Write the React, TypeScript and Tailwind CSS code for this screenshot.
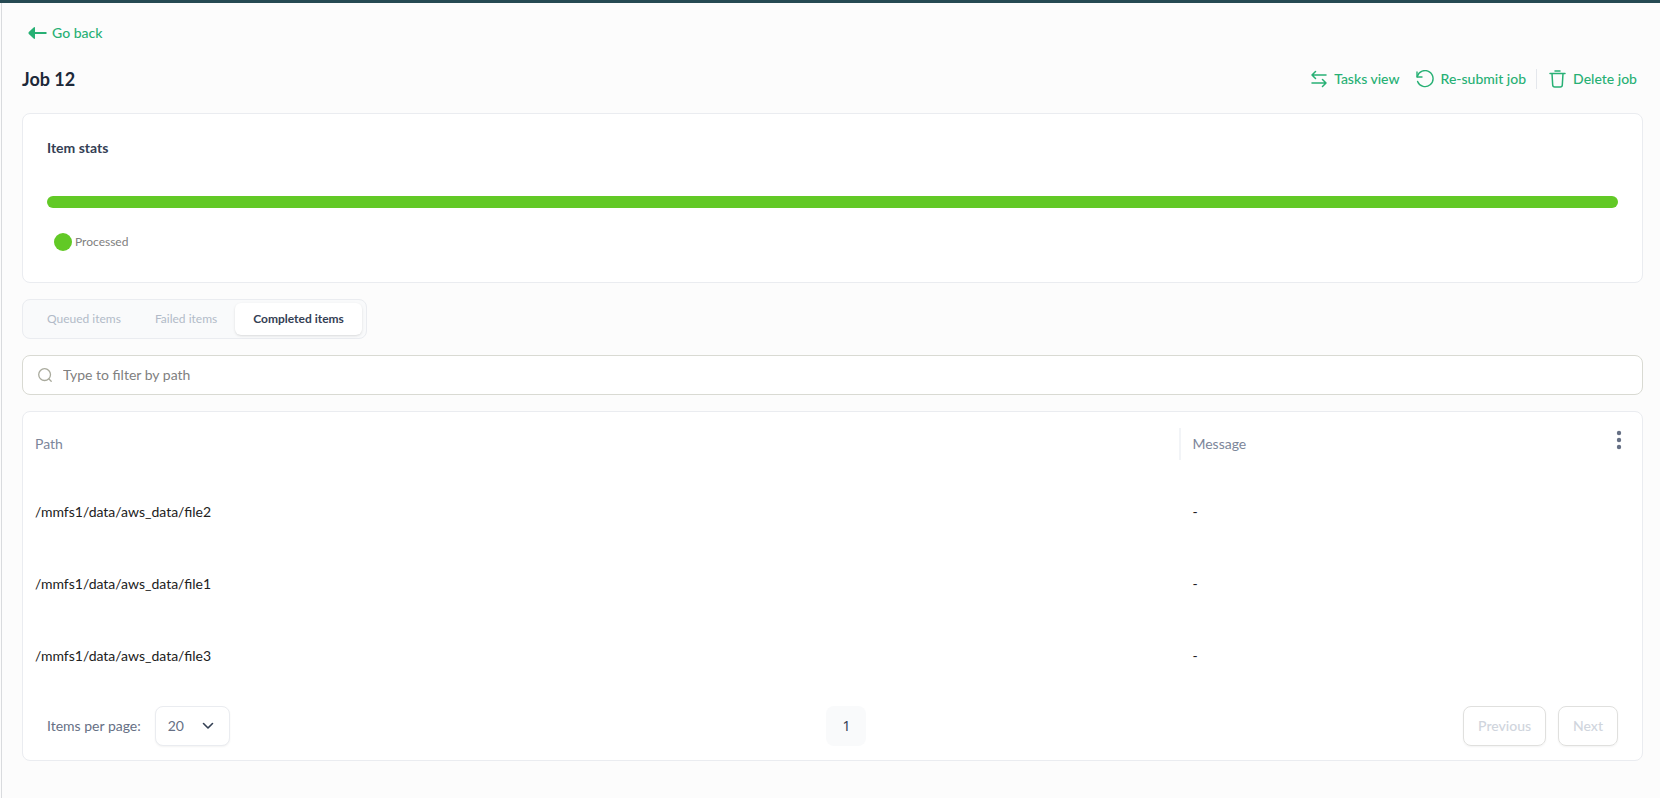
import { useState } from 'react';

const tabs = ['Queued items', 'Failed items', 'Completed items'];

const rows = [
    { path: '/mmfs1/data/aws_data/file2', message: '-' },
    { path: '/mmfs1/data/aws_data/file1', message: '-' },
    { path: '/mmfs1/data/aws_data/file3', message: '-' },
];

function ArrowLeft() {
    return (
        <svg width="19" height="14" viewBox="0 0 19 14" fill="currentColor">
            <path d="M7 1v12L5.600 12.600.8 8Q0 7 .8 6L5.600 1.400Z" />
            <path d="M6 6h12.500v2H6z" />
        </svg>
    );
}

function SwapIcon() {
    return (
        <svg width="16" height="18" viewBox="0 0 16 18" fill="none" stroke="currentColor" strokeWidth="1.500" strokeLinecap="round" strokeLinejoin="round">
            <path d="M15 5H1M4.500 1.500 1 5l3.500 3.500M1 13h14M11.500 9.500 15 13l-3.500 3.500" />
        </svg>
    );
}

function ResubmitIcon() {
    return (
        <svg width="18" height="18" viewBox="0 0 18 18" fill="none" stroke="currentColor" strokeWidth="1.400" strokeLinecap="round" strokeLinejoin="round">
            <path d="M1 2v5h5" />
            <path d="M1.300 6.700A8 8 0 1 1 1.600 11.500" />
        </svg>
    );
}

function TrashIcon() {
    return (
        <svg width="17" height="18" viewBox="0 0 17 18" fill="none" stroke="currentColor" strokeWidth="1.500" strokeLinecap="round" strokeLinejoin="round">
            <path d="M1 3.500h15M6 1h5M3 3.500l.7 11.500q.1 2 2.100 2h5.400q2 0 2.100-2L14 3.500" />
        </svg>
    );
}

function SearchIcon() {
    return (
        <svg className="shrink-0" width="14" height="14" viewBox="0 0 14 14" fill="none" stroke="#a9aa9d" strokeWidth="1.300" strokeLinecap="round">
            <circle cx="6.600" cy="6.600" r="5.900" />
            <path d="m11 11 2.200 2.200" />
        </svg>
    );
}

export default function App() {
    const [activeTab, setActiveTab] = useState('Completed items');
    const [filter, setFilter] = useState('');

    const visibleRows = rows.filter((row) => row.path.includes(filter));

    return (
        <div className="flex min-h-screen flex-col border-t-3 border-[#264a53] bg-[#fcfcfc] pl-px font-['Lato',sans-serif] text-sm text-[#344054]">
            <main className="grow border-l border-[#d9dbde] pt-5 pr-[17px] pb-9 pl-5">
                <a href="#" className="ml-1.5 flex h-5 w-fit items-center gap-[5px] font-medium text-[#27b074]">
                    <ArrowLeft />
                    Go back
                </a>

                {/* Title and job actions */}
                <div className="mt-5 flex h-8 items-center justify-between">
                    <h1 className="text-lg font-bold text-[#1d2939]">Job 12</h1>
                    <div className="flex items-center gap-4 pr-1.5 font-medium text-[#27b074]">
                        <button className="flex items-center gap-[7px]">
                            <SwapIcon />
                            Tasks view
                        </button>
                        <button className="flex items-center gap-[7px]">
                            <ResubmitIcon />
                            Re-submit job
                        </button>
                        <button className="-ml-1.5 flex h-5 items-center gap-[7px] border-l border-[#e4e7ec] pl-3">
                            <TrashIcon />
                            Delete job
                        </button>
                    </div>
                </div>

                {/* Item stats */}
                <section className="mt-[18px] h-[170px] rounded-lg border border-[#eaecf0] bg-white px-6 pt-6">
                    <h2 className="leading-5 font-bold">Item stats</h2>
                    <div className="mt-[38px] h-3 rounded-md bg-[#62c926]" />
                    <div className="mt-6 ml-[7px] flex h-5 items-center gap-[3px] text-xs text-[#808080]">
                        <span className="size-[18px] rounded-full bg-[#62c926]" />
                        Processed
                    </div>
                </section>

                {/* Tabs */}
                <div role="tablist" className="mt-4 flex h-10 w-fit items-center gap-0.5 rounded-lg border border-[#eaecf0] bg-[#f9fafb] pl-2 pr-1 text-xs">
                    {tabs.map((tab) => (
                        <button
                            key={tab}
                            role="tab"
                            aria-selected={activeTab === tab}
                            onClick={() => setActiveTab(tab)}
                            className={`h-8 rounded-md ${activeTab === tab
                                    ? 'bg-white px-[18px] font-bold shadow'
                                    : 'px-4 text-[#b2bac8]'
                                }`}
                        >
                            {tab}
                        </button>
                    ))}
                </div>

                <label className="mt-4 flex h-10 items-center gap-[11px] rounded-lg border border-[#d9dad3] bg-white px-[15px]">
                    <SearchIcon />
                    <input
                        type="text"
                        aria-label="Filter by path"
                        value={filter}
                        onChange={(e) => setFilter(e.target.value)}
                        placeholder="Type to filter by path"
                        className="w-full outline-none placeholder:text-[#808080]"
                    />
                </label>

                {/* Items table */}
                <section className="mt-4 rounded-lg border border-[#eaecf0] bg-white">
                    <table className="w-full table-fixed text-left">
                        <thead>
                            <tr className="h-16 text-[#7c869a]">
                                <th className="w-5/7 px-3 font-normal">Path</th>
                                <th className="p-0 font-normal">
                                    <div className="flex h-8 items-center justify-between border-l-2 border-[#f2f4f7] pl-[11px] pr-5">
                                        Message
                                        <button aria-label="Table options" className="pb-2">
                                            <svg width="6" height="20" viewBox="0 0 6 20" fill="#667085">
                                                <circle cx="3" cy="3" r="2.200" />
                                                <circle cx="3" cy="10" r="2.200" />
                                                <circle cx="3" cy="17" r="2.200" />
                                            </svg>
                                        </button>
                                    </div>
                                </th>
                            </tr>
                        </thead>
                        <tbody>
                            {visibleRows.map((row) => (
                                <tr key={row.path} className="h-18 text-[#212121]">
                                    <td className="px-3">{row.path}</td>
                                    <td className="px-[13px]">{row.message}</td>
                                </tr>
                            ))}
                        </tbody>
                    </table>

                    {/* Pagination */}
                    <div className="flex items-center justify-between px-6 py-3.5">
                        <div className="flex items-center gap-3.5 text-[#667085]">
                            <label htmlFor="page-size">Items per page:</label>
                            <div className="grid items-center">
                                <select id="page-size" defaultValue="20" className="col-start-1 row-start-1 h-10 w-[75px] appearance-none rounded-lg border border-[#eaecf0] bg-white pl-3 shadow-xs">
                                    <option>20</option>
                                    <option>50</option>
                                    <option>100</option>
                                </select>
                                <svg className="pointer-events-none col-start-1 row-start-1 mr-4 justify-self-end" width="12" height="8" viewBox="0 0 12 8" fill="none" stroke="#344054" strokeWidth="1.600" strokeLinecap="round" strokeLinejoin="round">
                                    <path d="m1.500 1.500 4.500 4.500 4.500-4.500" />
                                </svg>
                            </div>
                        </div>
                        <button className="size-10 rounded-lg bg-[#f9fafb] font-['Noto_Sans',sans-serif]">1</button>
                        <div className="flex gap-3 font-medium text-[#d0d5dd]">
                            <button disabled className="h-10 rounded-lg border border-[#e0e0de] px-3.5 shadow-xs">Previous</button>
                            <button disabled className="h-10 rounded-lg border border-[#e0e0de] px-3.5 shadow-xs">Next</button>
                        </div>
                    </div>
                </section>
            </main>
        </div>
    );
}
